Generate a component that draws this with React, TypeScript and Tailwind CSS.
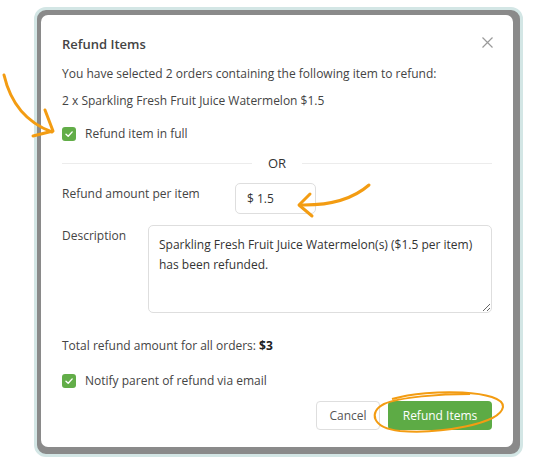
import React from "react";

const font = { fontFamily: '"Open Sans", "Noto Sans", sans-serif' };

function Check() {
  return (
    <span className="flex h-[14px] w-[14px] shrink-0 items-center justify-center rounded-[3px] bg-[#62ad48]">
      <svg width="10" height="10" viewBox="0 0 10 10" fill="none">
        <path d="M2 5.2 L4.2 7.3 L8.2 2.9" stroke="#ffffff" strokeWidth="1.4" strokeLinecap="round" strokeLinejoin="round" />
      </svg>
    </span>
  );
}

export default function App() {
  return (
    <div className="relative h-[463px] w-[549px] overflow-hidden bg-white" style={font}>
      <div className="ml-[34px] mt-[7px] h-[450px] w-[489px] rounded-[12px] border-[3px] border-[#d3e6e5] bg-[#8a8a8a] pb-[8px] pl-[4px] pr-[6px] pt-[5px]">
        <div className="flex h-[432px] w-[472px] flex-col rounded-[7px] bg-white pl-[21px] pr-[21px] pt-[20px] text-[12px] leading-[18px] text-[#444]">
          <div className="flex items-start justify-between">
            <div className="text-[13px] font-semibold text-[#444]">Refund Items</div>
            <svg className="mr-[-1px] mt-[2px]" width="11" height="11" viewBox="0 0 11 11">
              <path d="M0.5 0.5 L10.5 10.5 M10.5 0.5 L0.5 10.5" stroke="#9a9a9a" strokeWidth="1.2" />
            </svg>
          </div>
          <div className="mt-[12px]">You have selected 2 orders containing the following item to refund:</div>
          <div className="mt-[9px]">2 x Sparkling Fresh Fruit Juice Watermelon $1.5</div>
          <div className="mt-[15px] flex items-center gap-[9px]">
            <Check />
            <span>Refund item in full</span>
          </div>
          <div className="mt-[11px] flex items-center gap-4">
            <div className="h-px flex-1 bg-[#ececec]" />
            <span className="text-[13px] font-medium text-[#333]">OR</span>
            <div className="h-px flex-1 bg-[#ececec]" />
          </div>
          <div className="mt-[11px] flex items-start">
            <div className="mt-[2px] w-[173px]">Refund amount per item</div>
            <div className="flex h-[31px] w-[81px] items-center rounded-[5px] border border-[#dedede] pl-[11px] text-[#333]">
              $ 1.5
            </div>
          </div>
          <div className="mt-[11px] flex items-start">
            <div className="mt-[2px] w-[86px]">Description</div>
            <textarea
              readOnly
              value="Sparkling Fresh Fruit Juice Watermelon(s) ($1.5 per item) has been refunded."
              className="h-[88px] flex-1 resize-y rounded-[5px] border border-[#dedede] px-[10px] py-[9px] text-[12px] leading-[20px] text-[#333] outline-none"
              style={font}
            />
          </div>
          <div className="mt-[24px]">
            Total refund amount for all orders: <span className="font-bold text-[#222]">$3</span>
          </div>
          <div className="mt-[17px] flex items-center gap-[9px]">
            <Check />
            <span>Notify parent of refund via email</span>
          </div>
          <div className="mt-[11px] flex justify-end gap-[8px]">
            <div className="flex h-[29px] w-[64px] items-center justify-center rounded-[4px] border border-[#dedede] bg-white text-[12px] text-[#555]">
              Cancel
            </div>
            <div className="flex h-[29px] w-[104px] items-center justify-center rounded-[4px] bg-[#5dab45] text-[12px] text-white">
              Refund Items
            </div>
          </div>
        </div>
      </div>
      <svg className="pointer-events-none absolute left-0 top-0" width="549" height="463" viewBox="0 0 549 463" fill="none">
        <g stroke="#f39c12" strokeWidth="3" strokeLinecap="round" strokeLinejoin="round">
          <path d="M4 75 Q 14 118 52 132" />
          <path d="M45 110 L 53 131 L 33 136" />
          <path d="M369 185 Q 345 206 300 205" />
          <path d="M310 194 L 299 205 L 312 216" />
        </g>
        <g stroke="#f39c12" strokeWidth="2" fill="none">
          <path d="M392 399 C 430 388, 505 390, 503 407 C 500 424, 440 434, 400 431 C 372 428, 368 412, 384 404 C 400 397, 440 394, 470 394" />
        </g>
      </svg>
    </div>
  );
}
